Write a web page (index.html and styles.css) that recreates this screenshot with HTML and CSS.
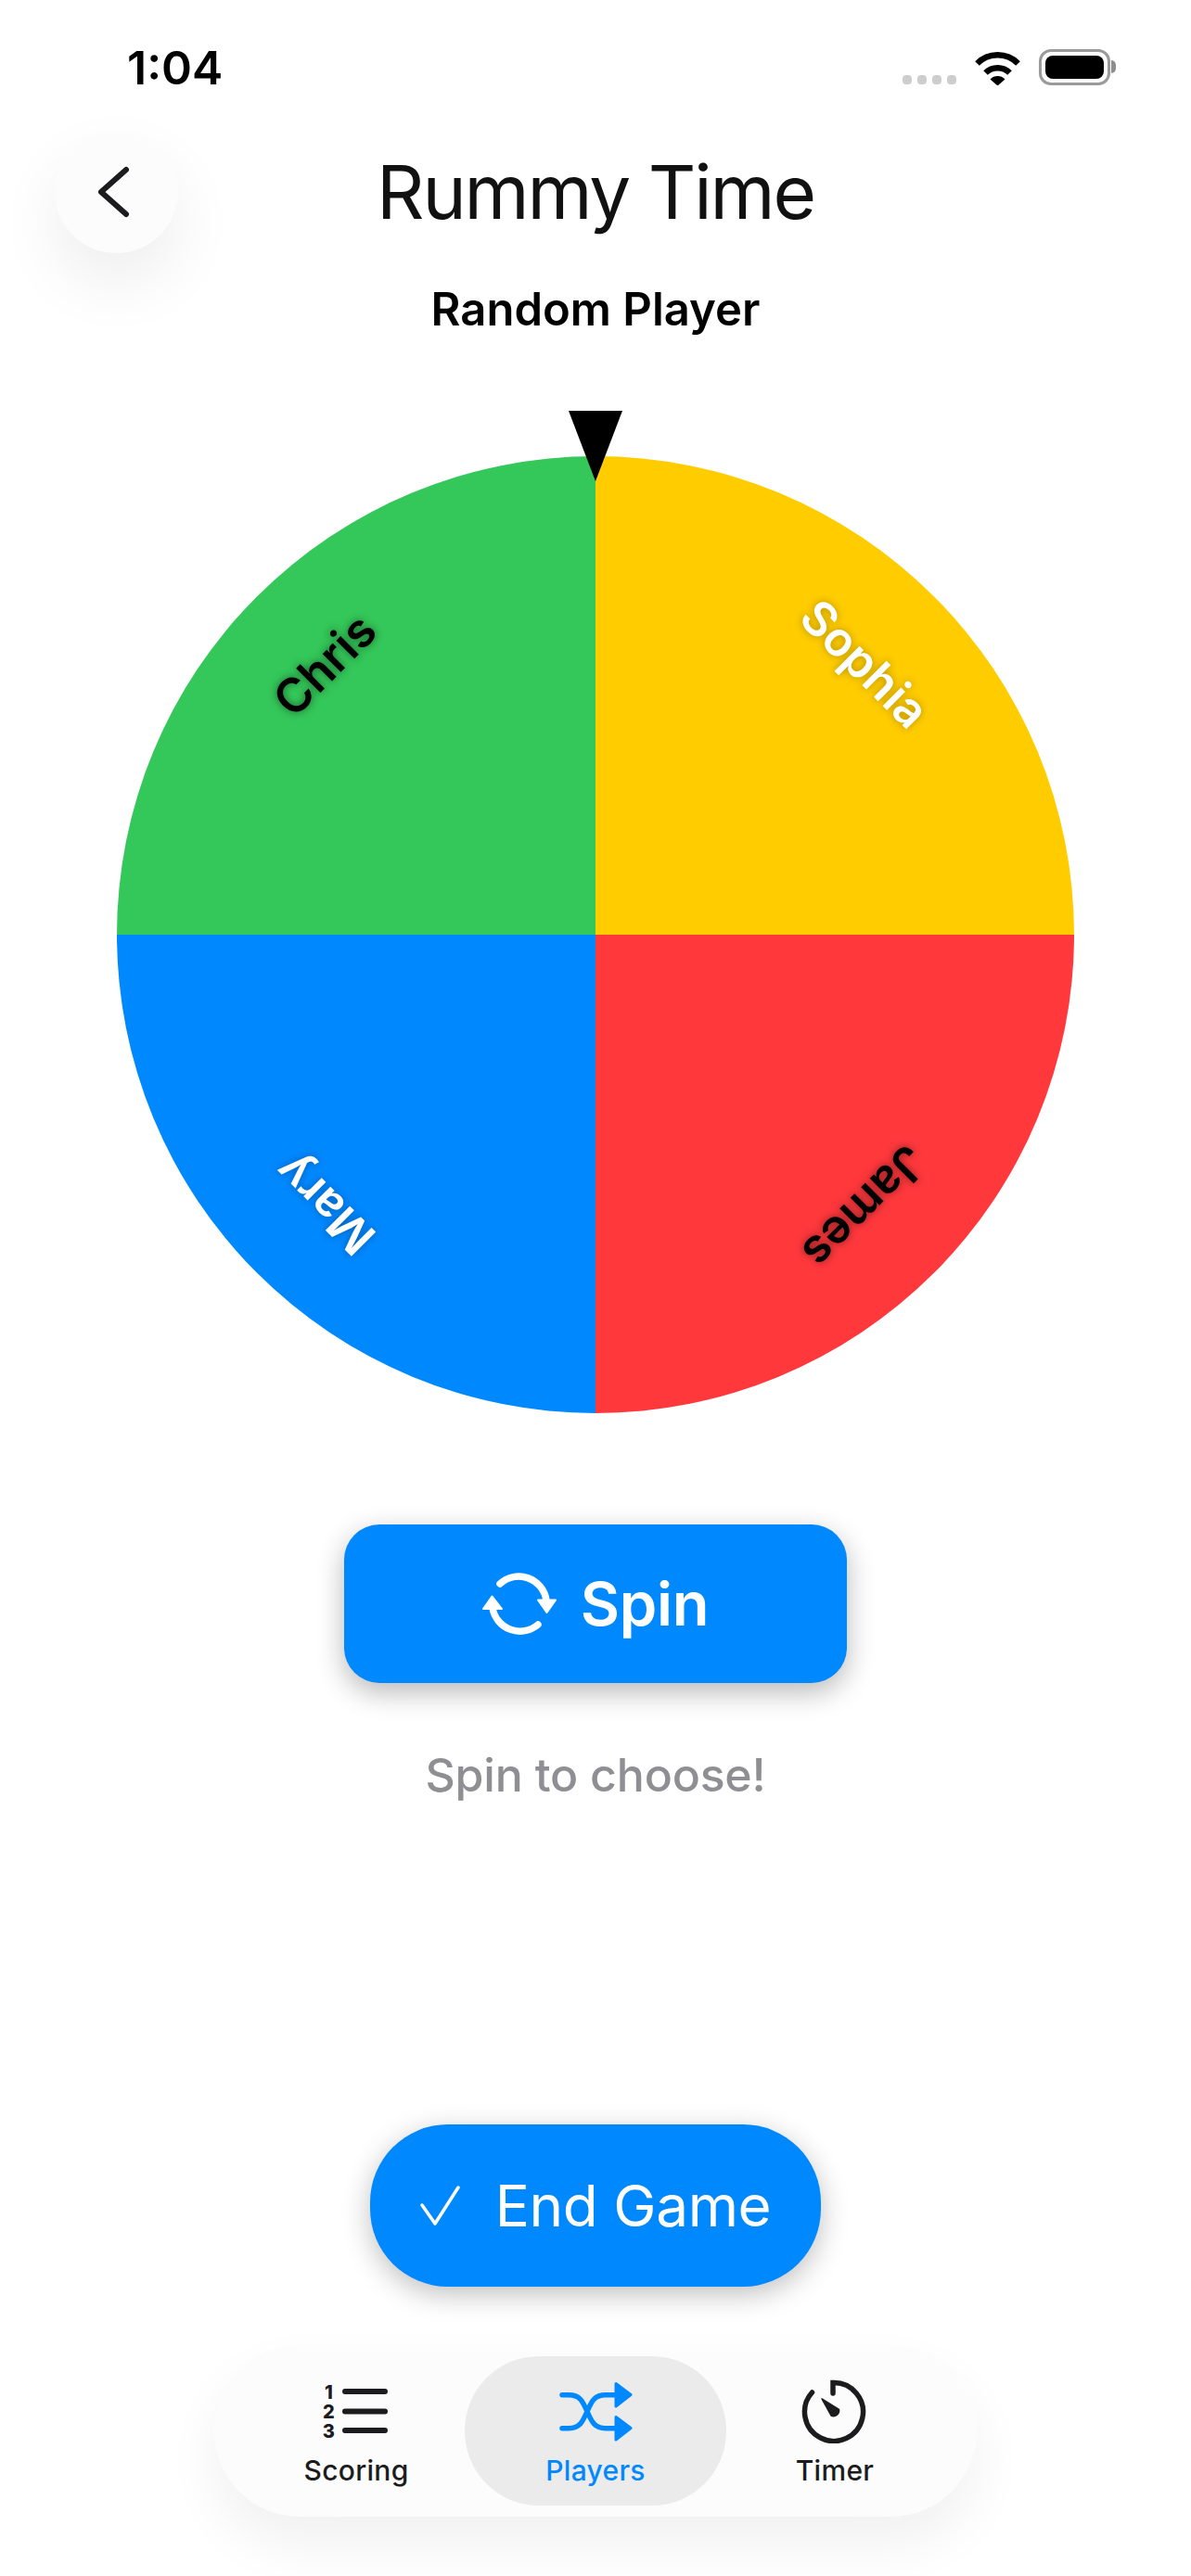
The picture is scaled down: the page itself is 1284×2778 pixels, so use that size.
FILE: index.html
```html
<!DOCTYPE html>
<html lang="en">
<head>
    <meta charset="UTF-8">
    <meta name="viewport" content="width=device-width, initial-scale=1.0">
    <title>Rummy Time</title>
    <link rel="stylesheet" href="styles.css">
</head>
<body>
    <div class="page">
        <!-- Status bar -->
        <div class="status-bar">
            <span class="time">1:04</span>
            <div class="status-icons">
                <div class="signal"><i></i><i></i><i></i><i></i></div>
                <svg class="wifi" width="49" height="37" viewBox="0 0 49 37">
                    <path d="M2.5 13.5A31 31 0 0 1 46.5 13.5" fill="none" stroke="#000" stroke-width="6.5"/>
                    <path d="M11.5 23.5A18.5 18.5 0 0 1 37.5 23.5" fill="none" stroke="#000" stroke-width="6.5"/>
                    <path d="M16.5 30.5A11 11 0 0 1 32.5 30.5L24.5 37.5Z" fill="#000"/>
                </svg>
                <div class="battery"><div class="battery-fill"></div><div class="battery-nub"></div></div>
            </div>
        </div>

        <!-- Header -->
        <div class="header">
            <button class="back-button">
                <svg width="40" height="60" viewBox="0 0 40 60">
                    <path d="M34 6L7 30L34 54" fill="none" stroke="#1c1c1e" stroke-width="6" stroke-linecap="round" stroke-linejoin="round"/>
                </svg>
            </button>
            <h1>Rummy Time</h1>
        </div>
        <h2>Random Player</h2>

        <!-- Wheel -->
        <div class="wheel-area">
            <div class="wheel">
                <span class="label chris">Chris</span>
                <span class="label sophia">Sophia</span>
                <span class="label james">James</span>
                <span class="label mary">Mary</span>
            </div>
            <div class="pointer"></div>
        </div>

        <button class="spin-button">
            <svg width="80" height="68" viewBox="0 0 80 68">
                <path d="M19 12A30 30 0 0 1 69 30" fill="none" stroke="#fff" stroke-width="7.5" stroke-linecap="round"/>
                <path d="M60 56A30 30 0 0 1 11 38" fill="none" stroke="#fff" stroke-width="7.5" stroke-linecap="round"/>
                <path d="M60 29.500H79L69.500 43Z" fill="#fff" stroke="#fff" stroke-width="2" stroke-linejoin="round"/>
                <path d="M1 39H21L10.500 25.500Z" fill="#fff" stroke="#fff" stroke-width="2" stroke-linejoin="round"/>
            </svg>
            Spin
        </button>
        <p class="hint">Spin to choose!</p>

        <button class="end-button">
            <svg width="44" height="46" viewBox="0 0 44 46">
                <path d="M2 22L16 42L41 3" fill="none" stroke="#fff" stroke-width="3.5" stroke-linecap="round" stroke-linejoin="round"/>
            </svg>
            End Game
        </button>

        <!-- Tab bar -->
        <div class="tab-bar">
            <div class="tab">
                <svg width="80" height="66" viewBox="0 0 80 66">
                    <text x="10.500" y="18" class="rank">1</text>
                    <text x="10.500" y="39" class="rank">2</text>
                    <text x="10.500" y="60" class="rank">3</text>
                    <path d="M28 10H71M28 31.500H71M28 52H71" stroke="#1c1c1e" stroke-width="6" stroke-linecap="round"/>
                </svg>
                <span>Scoring</span>
            </div>
            <div class="tab active">
                <svg width="80" height="66" viewBox="0 0 80 66">
                    <path d="M4 13.700H11C23 13.700 26 20 31 31.500C36 43 39 49.700 51 49.700H63M4 49.700H11C23 49.700 26 43 31 31.500C36 20 39 13.700 51 13.700H63" fill="none" stroke="#0088ff" stroke-width="5.500" stroke-linecap="round"/>
                    <path d="M62 1.500L78 13.500L62 26Z" fill="#0088ff" stroke="#0088ff" stroke-width="3" stroke-linejoin="round"/>
                    <path d="M62 37.500L78 49.500L62 62Z" fill="#0088ff" stroke="#0088ff" stroke-width="3" stroke-linejoin="round"/>
                </svg>
                <span>Players</span>
            </div>
            <div class="tab timer-tab">
                <svg width="80" height="70" viewBox="0 0 80 70">
                    <path d="M38 16V4.500A31.500 31.500 0 1 1 15.500 15" fill="none" stroke="#1c1c1e" stroke-width="5.500" stroke-linecap="round"/>
                    <path d="M26 22L44.500 33.500A6 6 0 0 1 36 40Z" fill="#1c1c1e" stroke="#1c1c1e" stroke-width="1.500" stroke-linejoin="round"/>
                </svg>
                <span>Timer</span>
            </div>
        </div>
    </div>
</body>
</html>
```

FILE: styles.css
```css
* {
    box-sizing: border-box;
}

body {
    margin: 0;
    background: #fff;
    font-family: Inter, "Noto Sans", sans-serif;
    color: #111;
}

.page {
    width: 1284px;
    height: 2778px;
    display: flex;
    flex-direction: column;
    align-items: center;
    overflow: hidden;
}

button {
    border: none;
    padding: 0;
    font-family: inherit;
}

/* Status bar */
.status-bar {
    width: 100%;
    height: 141px;
    padding: 44px 87px 0 137px;
    display: flex;
    justify-content: space-between;
    align-items: flex-start;
}

.time {
    font-size: 50px;
    font-weight: 600;
    line-height: 58px;
    color: #000;
}

.status-icons {
    display: flex;
    align-items: flex-end;
    margin-top: 9px;
}

.signal {
    display: flex;
    gap: 6px;
    margin-right: 20px;
    margin-bottom: 1px;
}

.signal i {
    width: 10px;
    height: 10px;
    border-radius: 4px;
    background: #cdcdcd;
}

.battery {
    position: relative;
    width: 77px;
    height: 39px;
    margin-left: 20px;
    padding: 4px;
    border: 3px solid #9a9a9a;
    border-radius: 13px;
}

.battery-fill {
    height: 100%;
    background: #000;
    border-radius: 8px;
}

.battery-nub {
    position: absolute;
    right: -9px;
    top: 9px;
    width: 5px;
    height: 14px;
    background: #8e8e8e;
    border-radius: 0 6px 6px 0;
}

/* Header */
.header {
    width: 100%;
    height: 132px;
    padding: 0 59px;
    display: grid;
    grid-template-columns: 133px 1fr 133px;
    align-items: center;
}

.back-button {
    width: 133px;
    height: 132px;
    border-radius: 50%;
    background: #fcfcfc;
    box-shadow: 0 32px 70px rgba(0, 0, 0, 0.07);
    display: flex;
    justify-content: center;
    align-items: center;
}

.back-button svg {
    margin-right: 7px;
}

h1 {
    margin: 0;
    text-align: center;
    font-size: 80px;
    font-weight: 400;
    line-height: 100px;
    letter-spacing: -2.1px;
}

h2 {
    margin: 31px 0 79px;
    height: 60px;
    font-size: 49px;
    font-weight: 600;
    line-height: 60px;
    color: #000;
}

/* Wheel */
.wheel-area {
    position: relative;
    width: 1032px;
    padding-top: 49px;
}

.wheel {
    position: relative;
    width: 1032px;
    height: 1032px;
    border-radius: 50%;
    background: conic-gradient(#ffcc00 0 25%, #ff383c 25% 50%, #0088ff 50% 75%, #34c759 75% 100%);
}

.pointer {
    position: absolute;
    top: 0;
    left: 487px;
    width: 58px;
    height: 76px;
    background: #000;
    clip-path: polygon(0 0, 100% 0, 50% 100%);
}

.label {
    position: absolute;
    width: 180px;
    margin: -35px 0 0 -90px;
    text-align: center;
    font-size: 51px;
    font-weight: 600;
    line-height: 70px;
}

.chris {
    left: 224px;
    top: 225px;
    color: #000;
    transform: rotate(-45deg);
    text-shadow: 0 0 8px rgba(0, 0, 0, 0.5);
}

.sophia {
    left: 806px;
    top: 224px;
    color: #fff;
    transform: rotate(45deg);
    text-shadow: 0 0 8px rgba(0, 0, 0, 0.3);
}

.james {
    left: 806px;
    top: 810px;
    color: #000;
    transform: rotate(135deg);
    text-shadow: 0 0 8px rgba(0, 0, 0, 0.5);
}

.mary {
    left: 224px;
    top: 807px;
    color: #fff;
    transform: rotate(225deg);
    text-shadow: 0 0 8px rgba(0, 0, 0, 0.3);
}

/* Buttons */
.spin-button {
    width: 542px;
    height: 171px;
    margin-top: 120px;
    border-radius: 38px;
    background: #0088ff;
    color: #fff;
    font-size: 65px;
    font-weight: 600;
    letter-spacing: -0.3px;
    display: flex;
    justify-content: center;
    align-items: center;
    gap: 26px;
    box-shadow: 0 10px 30px rgba(0, 0, 0, 0.28);
}

.hint {
    margin: 65px 0 0;
    font-size: 50px;
    font-weight: 500;
    line-height: 68px;
    letter-spacing: -0.2px;
    color: #8e8e93;
}

.end-button {
    width: 486px;
    height: 175px;
    margin-top: 343px;
    border-radius: 84px;
    background: #0088ff;
    color: #fff;
    font-size: 62px;
    font-weight: 400;
    letter-spacing: -0.4px;
    display: flex;
    justify-content: center;
    align-items: center;
    gap: 37px;
    box-shadow: 0 8px 30px rgba(0, 0, 0, 0.25);
}

/* Tab bar */
.tab-bar {
    width: 822px;
    height: 185px;
    margin-top: 63px;
    padding: 12px;
    border-radius: 92px;
    background: #fcfcfc;
    box-shadow: 0 30px 60px rgba(0, 0, 0, 0.06);
    display: flex;
}

.tab {
    flex: none;
    width: 282px;
    height: 161px;
    margin-left: -24px;
    border-radius: 80px;
    display: flex;
    flex-direction: column;
    align-items: center;
    justify-content: flex-end;
    padding-bottom: 20px;
    font-size: 30px;
    font-weight: 500;
    letter-spacing: 0.3px;
    color: #1c1c1e;
}

.tab:first-child {
    margin-left: 0;
}

.tab svg {
    display: block;
    margin-bottom: 11px;
}

.tab.active {
    position: relative;
    background: #ebebeb;
    color: #0088ff;
}

.rank {
    font-size: 20px;
    font-weight: 800;
    text-anchor: middle;
    fill: #1c1c1e;
}
```
